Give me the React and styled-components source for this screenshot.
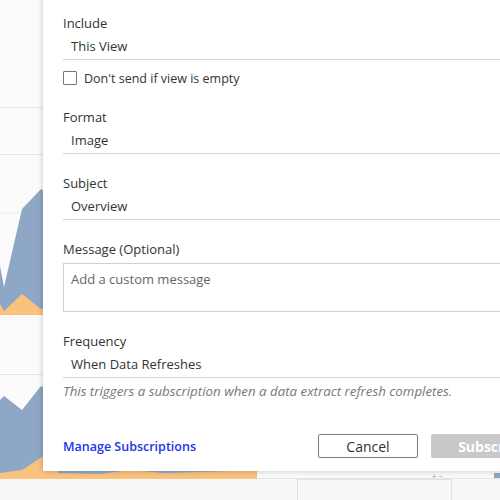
import React from 'react'
import styled, { createGlobalStyle } from 'styled-components'

const GlobalStyle = createGlobalStyle`
  html, body { margin: 0; padding: 0; }
  body { font-family: "Open Sans", "Liberation Sans", sans-serif; color: #333; }
  * { box-sizing: border-box; }
`

const fields = [
  { label: 'Include', value: 'This View', checkbox: "Don't send if view is empty" },
  { label: 'Format', value: 'Image' },
  { label: 'Subject', value: 'Overview' },
]

export default function App() {
  return (
    <>
      <GlobalStyle />
      <Page>
        <Dashboard>
          <Sheet>
            <HeaderRow />
            <FilterRow />
            <ChartRow height={164}>
              <svg width="260" height="164" viewBox="0 0 260 164">
                <line x1="0" y1="58" x2="260" y2="58" stroke="#ececec" />
                <path d="M0 111 L4 132 L22 54 L41 34 L80 60 L140 40 L200 70 L260 50 L260 160 L0 160 Z" fill="#8fa7c6" />
                <path d="M0 149 L4 156 L22 139 L41 154 L90 140 L150 150 L210 138 L260 150 L260 160 L0 160 Z" fill="#f9c27d" />
              </svg>
            </ChartRow>
            <Spacer height={55} />
            <ChartRow height={104} line>
              <svg width="260" height="104" viewBox="0 0 260 104">
                <path d="M0 25 L4 21 L22 35 L41 11 L80 30 L140 20 L200 40 L257 25 L257 103 L0 103 Z" fill="#8fa7c6" />
                <path d="M0 98 L22 95 L36 86 L42 82 L58 92 L58 104 L0 104 Z M58 98 L100 99 L130 95 L165 98 L230 96 L257 95 L257 104 L58 104 Z" fill="#f9c27d" />
              </svg>
            </ChartRow>
          </Sheet>
          <BottomBar>
            <BottomPanel width={298} />
            <BottomPanel width={154} divider>
              <ZoomControls>+ −</ZoomControls>
            </BottomPanel>
            <BottomPanel width={48}>
              <BlueTick />
            </BottomPanel>
          </BottomBar>
        </Dashboard>

        <Dialog>
          {fields.map((f) => (
            <React.Fragment key={f.label}>
              <Field>
                <Label>{f.label}</Label>
                <Select>{f.value}</Select>
              </Field>
              {f.checkbox && (
                <CheckRow>
                  <Checkbox />
                  <span>{f.checkbox}</span>
                </CheckRow>
              )}
            </React.Fragment>
          ))}

          <Field>
            <Label>Message (Optional)</Label>
            <TextArea placeholder="Add a custom message" />
          </Field>

          <Field>
            <Label>Frequency</Label>
            <Select>When Data Refreshes</Select>
            <Hint>This triggers a subscription when a data extract refresh completes.</Hint>
          </Field>

          <Footer>
            <Link href="#">Manage Subscriptions</Link>
            <Buttons>
              <Button width={100}>Cancel</Button>
              <Button width={122} primary disabled>Subscribe</Button>
            </Buttons>
          </Footer>
        </Dialog>
      </Page>
    </>
  )
}

const Page = styled.div`
  position: relative;
  width: 500px;
  height: 500px;
  overflow: hidden;
  background: #f7f7f7;
`
const Dashboard = styled.div`
  display: flex;
  flex-direction: column;
  height: 100%;
`
const Sheet = styled.div`
  display: flex;
  flex-direction: column;
  height: 479px;
  background: #fbfbfb;
  border-bottom: 1px solid #e4e4e4;
`
const HeaderRow = styled.div`
  height: 109px;
  border-bottom: 1px solid #e6e6e6;
`
const FilterRow = styled.div`
  height: 47px;
  border-bottom: 1px solid #e6e6e6;
`
const ChartRow = styled.div`
  height: ${(p) => p.height}px;
  border-top: ${(p) => (p.line ? '1px solid #e6e6e6' : 'none')};
  svg { display: block; }
`
const Spacer = styled.div`
  height: ${(p) => p.height}px;
`
const BottomBar = styled.div`
  flex: 1;
  display: flex;
`
const BottomPanel = styled.div`
  position: relative;
  width: ${(p) => p.width}px;
  border-right: 1px solid #e2e2e2;
  border-top: ${(p) => (p.divider ? '1px solid #e2e2e2' : 'none')};
  &:last-child { border-right: none; }
`
const ZoomControls = styled.span`
  position: absolute;
  right: 8px;
  top: -10px;
  font-size: 8px;
  color: #999;
`
const BlueTick = styled.div`
  position: absolute;
  right: 0;
  top: -6px;
  width: 6px;
  height: 5px;
  background: #8fa7c6;
`

const Dialog = styled.div`
  position: absolute;
  left: 43px;
  top: -20px;
  width: 530px;
  padding: 33px 20px 13px 20px;
  background: #fff;
  box-shadow: 0 0 6px rgba(0, 0, 0, 0.22);
  display: flex;
  flex-direction: column;
`
const Field = styled.div`
  display: flex;
  flex-direction: column;
  & + & { margin-top: 19px; }
`
const Label = styled.div`
  height: 20px;
  line-height: 20px;
  font-size: 13px;
  color: #333;
`
const Select = styled.div`
  height: 27px;
  line-height: 27px;
  padding-left: 8px;
  font-size: 13px;
  color: #333;
  border-bottom: 1px solid #d6d6d6;
`
const CheckRow = styled.label`
  display: flex;
  align-items: center;
  gap: 7px;
  height: 18px;
  margin: 9px 0 20px;
  font-size: 12.5px;
  color: #333;
`
const Checkbox = styled.span`
  width: 14px;
  height: 14px;
  border: 1px solid #777;
  border-radius: 1px;
  background: #fff;
`
const TextArea = styled.textarea`
  margin-top: 4px;
  height: 49px;
  padding: 6px 7px;
  border: 1px solid #d0d0d0;
  font-family: inherit;
  font-size: 13px;
  resize: none;
  outline: none;
  &::placeholder { color: #666; }
`
const Hint = styled.div`
  margin-top: 4px;
  line-height: 18px;
  font-size: 13.3px;
  font-style: italic;
  color: #777;
`
const Footer = styled.div`
  display: flex;
  align-items: center;
  justify-content: space-between;
  margin-top: 34px;
`
const Link = styled.a`
  font-size: 12.5px;
  font-weight: 600;
  color: #2233e8;
  text-decoration: none;
`
const Buttons = styled.div`
  display: flex;
  gap: 13px;
`
const Button = styled.button`
  width: ${(p) => p.width}px;
  height: 24px;
  padding: 0;
  border-radius: 2px;
  font-family: inherit;
  font-size: 14px;
  font-weight: ${(p) => (p.primary ? 700 : 400)};
  color: ${(p) => (p.primary ? '#fff' : '#333')};
  background: ${(p) => (p.primary ? '#c9c9c9' : '#fff')};
  border: 1px solid ${(p) => (p.primary ? '#c9c9c9' : '#7a7a7a')};
`
